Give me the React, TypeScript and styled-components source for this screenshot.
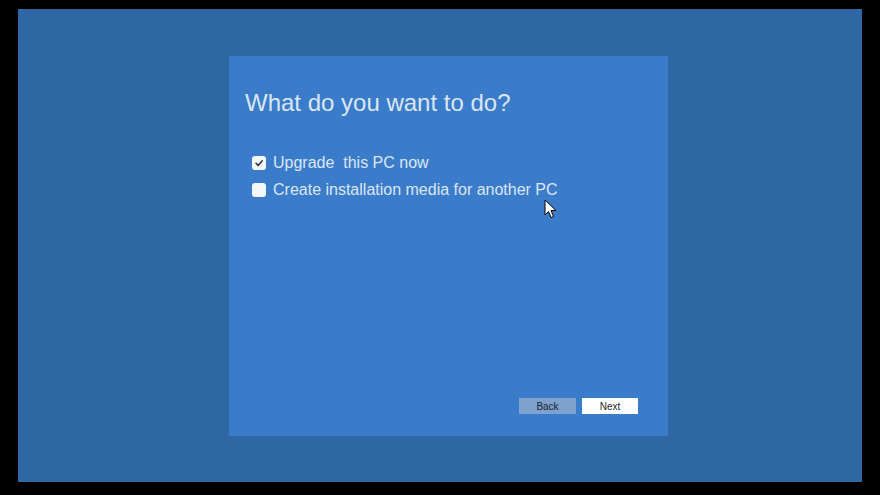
import React from 'react'
import styled, { createGlobalStyle } from 'styled-components'

const Global = createGlobalStyle`
  html, body {
    margin: 0;
    padding: 0;
    background: #000;
  }
  body {
    font-family: 'Liberation Sans', Arial, sans-serif;
  }
`

const Screen = styled.div`
  width: 880px;
  height: 495px;
  box-sizing: border-box;
  padding: 9px 18px 13px 18px;
  background: #000;
  display: flex;
`

const Desktop = styled.div`
  flex: 1;
  background: #2f67a4;
  display: flex;
  justify-content: center;
  padding-top: 47px;
  padding-left: 17px;
  position: relative;
`

const Dialog = styled.div`
  width: 439px;
  height: 380px;
  box-sizing: border-box;
  background: #3a7cc9;
  padding: 29px 30px 22px 16px;
  display: flex;
  flex-direction: column;
  position: relative;
`

const Title = styled.h1`
  margin: 0;
  font-weight: normal;
  font-size: 24px;
  line-height: 36px;
  color: #dce6f3;
`

const Options = styled.div`
  margin-top: 32px;
  padding-left: 7px;
  display: flex;
  flex-direction: column;
  gap: 8px;
`

const Option = styled.label`
  display: flex;
  align-items: center;
  gap: 7px;
  font-size: 16px;
  line-height: 19px;
  color: #dce6f3;
  white-space: pre;
`

const Box = styled.span`
  width: 14px;
  height: 14px;
  border-radius: 3px;
  background: #f4f6f9;
  display: flex;
  align-items: center;
  justify-content: center;
  flex: none;
`

const Footer = styled.div`
  margin-top: auto;
  display: flex;
  justify-content: flex-end;
  gap: 6px;
`

const Button = styled.button<{ primary?: boolean }>`
  width: ${(p) => (p.primary ? 56 : 57)}px;
  height: 16px;
  padding: 0;
  border: none;
  font-family: 'Liberation Sans', Arial, sans-serif;
  font-size: 10px;
  color: #1a1f2a;
  background: ${(p) => (p.primary ? '#ffffff' : '#7ea1cf')};
`

const Cursor = styled.svg`
  position: absolute;
  left: 315px;
  top: 143px;
`

const Check = () => (
  <svg width='10' height='10' viewBox='0 0 10 10'>
    <path d='M2 5.2 L4.2 7.4 L8.2 2.8' fill='none' stroke='#2b2f36' strokeWidth='1.5' strokeLinecap='round' strokeLinejoin='round' />
  </svg>
)

export default function App() {
  return (
    <>
      <Global />
      <Screen>
        <Desktop>
          <Dialog>
            <Title>What do you want to do?</Title>
            <Options>
              <Option>
                <Box>
                  <Check />
                </Box>
                {'Upgrade  this PC now'}
              </Option>
              <Option>
                <Box />
                Create installation media for another PC
              </Option>
            </Options>
            <Footer>
              <Button>Back</Button>
              <Button primary>Next</Button>
            </Footer>
            <Cursor width='14' height='20' viewBox='0 0 14 20'>
              <path d='M1 1 L1 16 L4.5 12.5 L7 18.5 L9.5 17.5 L7 11.5 L12 11.5 Z' fill='#fff' stroke='#000' strokeWidth='1' strokeLinejoin='round' />
            </Cursor>
          </Dialog>
        </Desktop>
      </Screen>
    </>
  )
}
